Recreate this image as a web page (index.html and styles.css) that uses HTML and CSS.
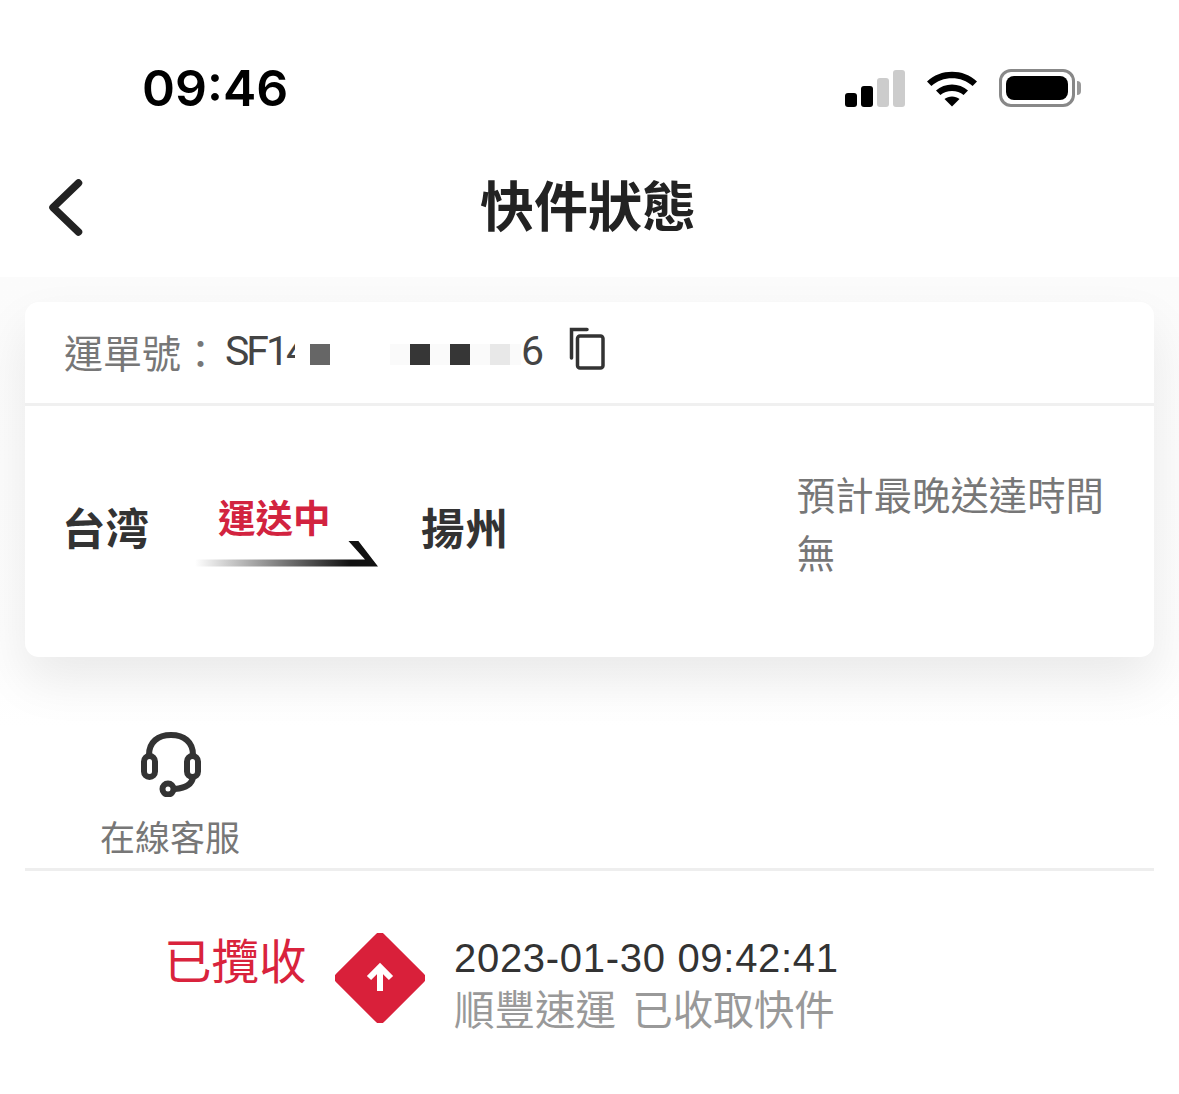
FILE: index.html
```html
<!DOCTYPE html>
<html lang="zh-TW">
<head>
  <meta charset="UTF-8" />
  <meta name="viewport" content="width=device-width, initial-scale=1.0"/>
  <title>快件狀態</title>
  <link rel="stylesheet" href="styles.css">
</head>
<body>
  <div class="status-bar">
    <span class="clock">09:46</span>
    <div class="status-icons">
      <div class="signal">
        <i class="bar bar-1"></i>
        <i class="bar bar-2"></i>
        <i class="bar bar-3"></i>
        <i class="bar bar-4"></i>
      </div>
      <svg class="wifi" width="52" height="38" viewBox="0 0 52 38">
        <path d="M1 12.5C14.5 -0.5 37.5 -0.5 51 12.5L46.6 17C35.5 6.5 16.5 6.5 5.4 17Z" fill="#000"/>
        <path d="M10 21.5C18.5 13.5 33.5 13.5 42 21.5L37.6 26C31.5 20.5 20.5 20.5 14.4 26Z" fill="#000"/>
        <path d="M18.5 30C22.5 26.5 29.5 26.5 33.5 30L26 37.5Z" fill="#000"/>
      </svg>
      <div class="battery">
        <div class="battery-shell"><div class="battery-fill"></div></div>
        <i class="battery-cap"></i>
      </div>
    </div>
  </div>

  <header class="nav">
    <svg class="back" width="36" height="60" viewBox="0 0 36 60">
      <path d="M31.500 5L6 29.500L31.500 54" fill="none" stroke="#222" stroke-width="7.500" stroke-linecap="round" stroke-linejoin="round"/>
    </svg>
    <h1>快件狀態</h1>
  </header>

  <main class="content">
    <section class="card">
      <div class="waybill">
        <span class="waybill-label">運單號：</span>
        <span class="waybill-no">SF14</span>
        <span class="mask-row">
          <i class="mask mask-mid"></i>
          <i class="mask mask-none"></i>
          <i class="mask mask-none"></i>
          <i class="mask mask-none"></i>
          <i class="mask mask-faint"></i>
          <i class="mask mask-dark"></i>
          <i class="mask mask-faint"></i>
          <i class="mask mask-dark"></i>
          <i class="mask mask-faint"></i>
          <i class="mask mask-light"></i>
          <i class="mask mask-faint tail"></i>
        </span>
        <span class="waybill-end">6</span>
        <svg class="copy" width="38" height="44" viewBox="0 0 38 44">
          <path d="M19 2.500H3.500V31" fill="none" stroke="#333" stroke-width="3.500" stroke-linecap="round"/>
          <rect x="9.500" y="9" width="25.500" height="32" rx="2.500" fill="none" stroke="#333" stroke-width="3.500"/>
        </svg>
      </div>

      <div class="route">
        <div class="route-main">
          <span class="city">台湾</span>
          <div class="transit">
            <span class="transit-text">運送中</span>
            <div class="transit-arrow"></div>
          </div>
          <span class="city">揚州</span>
        </div>
        <div class="eta">
          <p>預計最晚送達時間</p>
          <p>無</p>
        </div>
      </div>
    </section>

    <div class="service">
      <div class="service-item">
        <svg class="service-icon" width="62" height="66" viewBox="0 0 62 66">
          <path d="M9 28V24C9 11 18 4 31 4C44 4 53 11 53 24V28" fill="none" stroke="#333" stroke-width="6"/>
          <rect x="4" y="25" width="11" height="21" rx="5.500" fill="none" stroke="#333" stroke-width="6"/>
          <rect x="47" y="25" width="11" height="21" rx="5.500" fill="none" stroke="#333" stroke-width="6"/>
          <path d="M53 46C52 53 46 57 35 58" fill="none" stroke="#333" stroke-width="6"/>
          <circle cx="28" cy="58" r="5.500" fill="none" stroke="#333" stroke-width="6"/>
        </svg>
        <span>在線客服</span>
      </div>
    </div>

    <div class="track">
      <span class="track-state">已攬收</span>
      <svg class="track-icon" width="90" height="90" viewBox="0 0 90 90">
        <rect x="11" y="11" width="68" height="68" rx="6" transform="rotate(45 45 45)" fill="#d9203a"/>
        <path d="M45 58V34M34 45L45 34L56 45" fill="none" stroke="#fff" stroke-width="6"/>
      </svg>
      <div class="track-info">
        <p class="track-time">2023-01-30 09:42:41</p>
        <p class="track-desc">順豐速運 已收取快件</p>
      </div>
    </div>
  </main>
</body>
</html>
```

FILE: styles.css
```css
* {
  box-sizing: border-box;
}
html, body {
  margin: 0;
  height: 100%;
}
body {
  width: 1179px;
  height: 1094px;
  overflow: hidden;
  background: #fff;
  font-family: "Liberation Sans", "Noto Sans CJK TC", sans-serif;
}
p, h1 {
  margin: 0;
  font-weight: normal;
}

/* status bar */
.status-bar {
  height: 150px;
  padding: 26px 98px 0 142px;
  display: flex;
  align-items: center;
  justify-content: space-between;
}
.clock {
  font-family: Inter, sans-serif;
  font-size: 50px;
  font-weight: 600;
  color: #000;
  line-height: 1;
}
.status-icons {
  display: flex;
  align-items: center;
  gap: 21px;
}
.signal {
  display: flex;
  align-items: flex-end;
  gap: 4px;
  height: 38px;
}
.bar {
  width: 12px;
  border-radius: 3px;
  background: #000;
}
.bar-1 { height: 14px; }
.bar-2 { height: 21px; }
.bar-3 { height: 29px; background: #ccc; }
.bar-4 { height: 37px; background: #ccc; }
.battery {
  display: flex;
  align-items: center;
  gap: 2px;
}
.battery-shell {
  width: 76px;
  height: 38px;
  padding: 4px;
  border: 3px solid #888;
  border-radius: 12px;
}
.battery-fill {
  height: 100%;
  border-radius: 8px;
  background: #000;
}
.battery-cap {
  width: 4px;
  height: 14px;
  border-radius: 0 4px 4px 0;
  background: #999;
}

/* nav */
.nav {
  height: 127px;
  display: flex;
  align-items: center;
  justify-content: center;
  position: relative;
  z-index: 1;
  background: #fff;
}
.back {
  position: absolute;
  left: 47px;
  top: 28px;
}
.nav h1 {
  font-size: 54px;
  font-weight: 700;
  color: #222;
  line-height: 1;
  margin-top: -12px;
  margin-left: -3px;
}

/* main */
.content {
  padding: 25px 25px 0;
  background: linear-gradient(to bottom, #fbfbfb, #fdfdfd 380px, #fff 450px);
}
.card {
  height: 355px;
  background: #fff;
  border-radius: 14px;
  box-shadow: 0 24px 50px rgba(0,0,0,0.08);
}
.waybill {
  height: 104px;
  padding: 0 0 0 39px;
  border-bottom: 3px solid #f0f0f0;
  display: flex;
  align-items: center;
  position: relative;
}
.waybill-label {
  font-size: 39px;
  color: #777;
  width: 161px;
  margin-top: -4px;
}
.waybill-no {
  font-family: Roboto, sans-serif;
  font-size: 41px;
  letter-spacing: -3px;
  color: #444;
  width: 70px;
  overflow: hidden;
  white-space: nowrap;
  margin-top: -4px;
}
.mask-row {
  display: flex;
  margin-left: 15px;
  margin-top: 3px;
}
.mask {
  width: 20px;
  height: 21px;
}
.mask-mid { background: #666; }
.mask-dark { background: #363636; }
.mask-light { background: #e8e8e8; }
.mask-faint { background: #fafafa; }
.tail { width: 11px; }
.waybill-end {
  font-family: Roboto, sans-serif;
  font-size: 41px;
  color: #444;
  margin-top: -4px;
}
.copy {
  margin-left: 24px;
  margin-top: -8px;
}

.route {
  height: 251px;
  padding: 0 50px 0 37px;
  display: flex;
  justify-content: space-between;
}
.route-main {
  display: flex;
  align-items: center;
  height: 250px;
}
.city {
  font-size: 43.500px;
  font-weight: 700;
  color: #333;
  line-height: 1;
}
.transit {
  width: 183px;
  margin: 2px 43px 0 46px;
}
.transit-text {
  display: block;
  padding-left: 23px;
  font-size: 37.500px;
  line-height: 42px;
  font-weight: 700;
  color: #d2233f;
}
.transit-arrow {
  height: 26px;
  margin-top: 1px;
  background: linear-gradient(to right, #fff, #111 85%);
  clip-path: polygon(0 19px, 170px 19px, 153px 0, 163px 0, 183px 26px, 0 26px);
}
.eta {
  padding-top: 62px;
  font-size: 38.400px;
  line-height: 58px;
  color: #777;
}

.service {
  height: 214px;
  border-bottom: 3px solid #eee;
  padding: 74px 0 0 75px;
}
.service-item {
  width: 140px;
  display: flex;
  flex-direction: column;
  align-items: center;
  gap: 21px;
  font-size: 35px;
  color: #777;
  line-height: 42px;
}
.service-icon {
  margin-left: 2px;
}

.track {
  display: flex;
  align-items: flex-start;
  padding: 62px 0 0 139px;
}
.track-state {
  width: 141px;
  font-size: 47.500px;
  line-height: 60px;
  white-space: nowrap;
  color: #d9233c;
}
.track-icon {
  margin: 0 0 0 30px;
}
.track-info {
  margin-left: 29px;
}
.track-time {
  font-size: 40px;
  line-height: 50px;
  letter-spacing: 0.700px;
  color: #333;
}
.track-desc {
  font-size: 40.500px;
  word-spacing: 5px;
  line-height: 57px;
  color: #999;
}
```
